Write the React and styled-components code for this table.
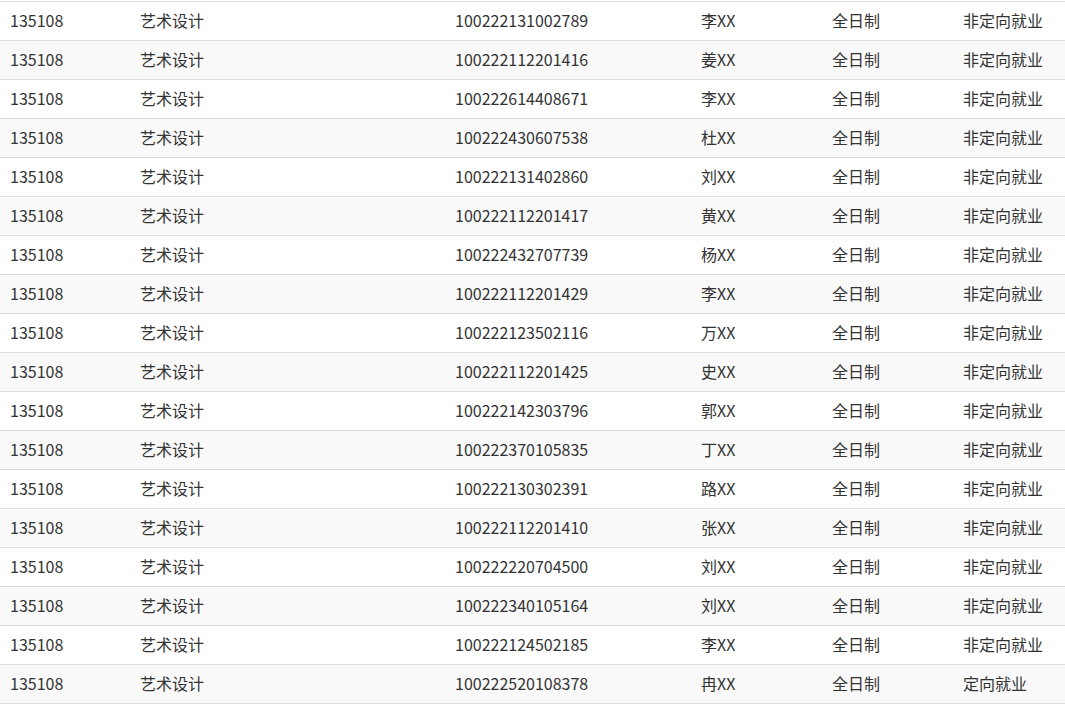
import React from 'react';
import styled, { createGlobalStyle } from 'styled-components';

const GlobalStyle = createGlobalStyle`
  html, body {
    margin: 0;
    padding: 0;
    background: #fff;
  }

  body {
    font-family: "Noto Sans CJK SC", "Noto Sans", sans-serif;
    color: #333;
  }
`;

const Wrapper = styled.div`
  padding-top: 1px;
  width: 1065px;
`;

const Table = styled.table`
  width: 100%;
  border-collapse: separate;
  border-spacing: 0;
  table-layout: fixed;
  font-size: 16px;
`;

const Row = styled.tr`
  background: ${props => (props.$striped ? '#f9f9f9' : '#fff')};

  &:first-child td {
    border-top: 1px solid #ddd;
  }
`;

const Cell = styled.td`
  padding: 0 0 1px 10px;
  border-bottom: 1px solid #ddd;
  line-height: 37px;
  white-space: nowrap;
  overflow: hidden;
  color: #333;
`;

const columns = [130, 315, 246, 131, 131, 112];

const rows = [
  ['100222131002789', '李XX', '非定向就业'],
  ['100222112201416', '姜XX', '非定向就业'],
  ['100222614408671', '李XX', '非定向就业'],
  ['100222430607538', '杜XX', '非定向就业'],
  ['100222131402860', '刘XX', '非定向就业'],
  ['100222112201417', '黄XX', '非定向就业'],
  ['100222432707739', '杨XX', '非定向就业'],
  ['100222112201429', '李XX', '非定向就业'],
  ['100222123502116', '万XX', '非定向就业'],
  ['100222112201425', '史XX', '非定向就业'],
  ['100222142303796', '郭XX', '非定向就业'],
  ['100222370105835', '丁XX', '非定向就业'],
  ['100222130302391', '路XX', '非定向就业'],
  ['100222112201410', '张XX', '非定向就业'],
  ['100222220704500', '刘XX', '非定向就业'],
  ['100222340105164', '刘XX', '非定向就业'],
  ['100222124502185', '李XX', '非定向就业'],
  ['100222520108378', '冉XX', '定向就业'],
];

const App = () => (
  <>
    <GlobalStyle />
    <Wrapper>
      <Table>
        <colgroup>
          {columns.map((w, i) => (
            <col key={i} style={{ width: w }} />
          ))}
        </colgroup>
        <tbody>
          {rows.map(([id, name, type], i) => (
            <Row key={id} $striped={i % 2 === 1}>
              <Cell>135108</Cell>
              <Cell>艺术设计</Cell>
              <Cell>{id}</Cell>
              <Cell>{name}</Cell>
              <Cell>全日制</Cell>
              <Cell>{type}</Cell>
            </Row>
          ))}
        </tbody>
      </Table>
    </Wrapper>
  </>
);

export default App;
